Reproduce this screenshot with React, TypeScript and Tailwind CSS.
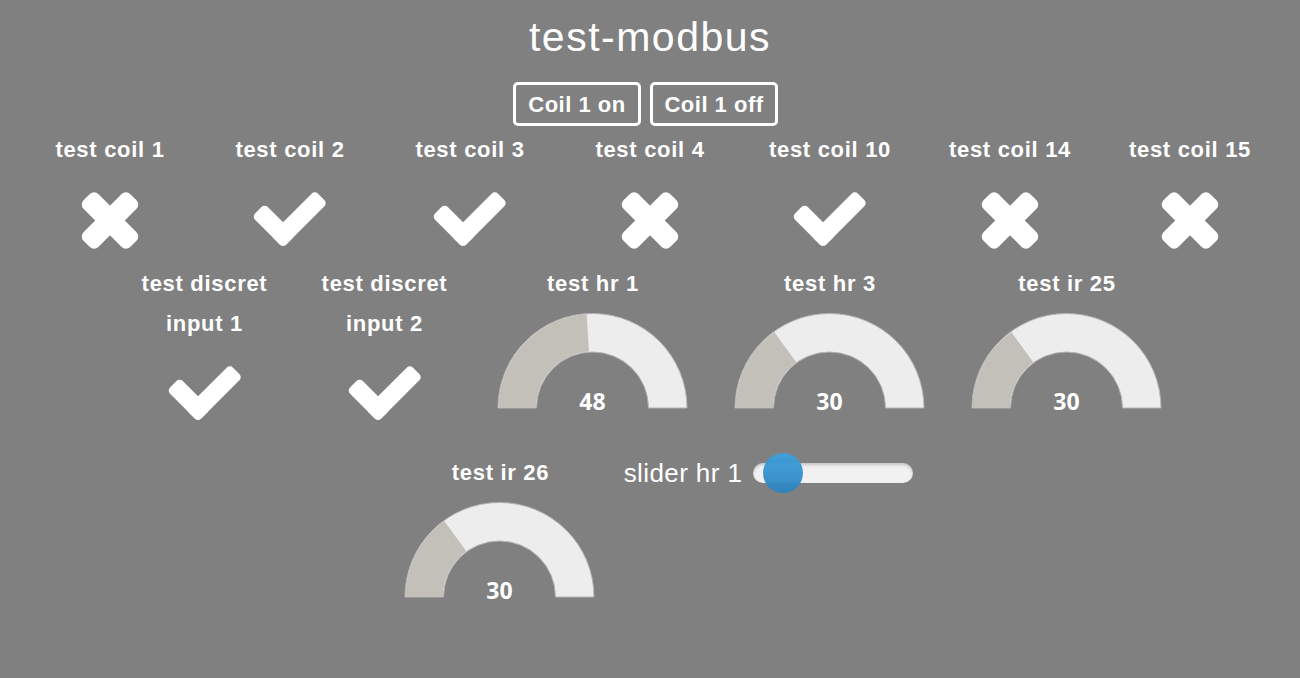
// Tableau de bord modbus: bobines, entrées discrètes, jauges et un curseur

const coils = [
  { name: 'test coil 1', on: false },
  { name: 'test coil 2', on: true },
  { name: 'test coil 3', on: true },
  { name: 'test coil 4', on: false },
  { name: 'test coil 10', on: true },
  { name: 'test coil 14', on: false },
  { name: 'test coil 15', on: false },
]

const discrets = [
  { name: 'test discret input 1', on: true },
  { name: 'test discret input 2', on: true },
]

const gauges = [
  { name: 'test hr 1', value: 48 },
  { name: 'test hr 3', value: 30 },
  { name: 'test ir 25', value: 30 },
]

// coche épaisse: deux barres arrondies qui se rejoignent en bas
function CheckIcon() {
  const t = 18
  return (
    <svg width="74" height="56" viewBox="0 0 74 56" fill="white" overflow="visible">
      <g transform="translate(30 43)">
        <rect x={-t / 2} y={-t / 2} width={54 + t / 2} height={t} rx="4.5" transform="rotate(-45)" />
        <rect x={-t / 2} y={-t / 2} width={35 + t / 2} height={t} rx="4.5" transform="rotate(225)" />
      </g>
    </svg>
  )
}

function CrossIcon() {
  return (
    <svg width="58" height="57" viewBox="0 0 58 57" fill="white" overflow="visible">
      <g transform="translate(29 28.5)">
        <rect x="-33" y="-10.5" width="66" height="21" rx="6" transform="rotate(45)" />
        <rect x="-33" y="-10.5" width="66" height="21" rx="6" transform="rotate(-45)" />
      </g>
    </svg>
  )
}

function Label({ children }: { children: React.ReactNode }) {
  return (
    <div className="px-5 text-center text-[22px] leading-[40px] font-bold tracking-[0.7px] text-white">
      {children}
    </div>
  )
}

function BoolTile({ name, on }: { name: string; on: boolean }) {
  return (
    <div className="w-[180px]">
      <Label>{name}</Label>
      <div className="flex h-[94px] justify-center pt-[22px]">
        {on ? <CheckIcon /> : <CrossIcon />}
      </div>
    </div>
  )
}

function arcPath(cx: number, cy: number, R: number, r: number, from: number, to: number) {
  // angles en degrés, 0 = gauche, 180 = droite
  const p = (rad: number, a: number) => {
    const t = (a * Math.PI) / 180
    return [cx - rad * Math.cos(t), cy - rad * Math.sin(t)]
  }
  const [x1, y1] = p(R, from)
  const [x2, y2] = p(R, to)
  const [x3, y3] = p(r, to)
  const [x4, y4] = p(r, from)
  return `M${x1} ${y1} A${R} ${R} 0 0 1 ${x2} ${y2} L${x3} ${y3} A${r} ${r} 0 0 0 ${x4} ${y4} Z`
}

function Gauge({ name, value }: { name: string; value: number }) {
  const cx = 117.5
  const cy = 104
  const angle = (value / 100) * 180
  return (
    <div className="w-[237px]">
      <Label>{name}</Label>
      <svg width="237" height="149">
        <path d={arcPath(cx, cy, 94.5, 56, 0, 180)} fill="#ededed" stroke="#b4b4b4" strokeWidth="1" />
        <path d={arcPath(cx, cy, 94, 56.5, 0, angle)} fill="#c3c0ba" />
        <text
          x={cx}
          y={cy + 2}
          textAnchor="middle"
          fill="#ffffff"
          fontSize="23"
          fontWeight="700"
          fontFamily="'Open Sans', sans-serif"
        >
          {value}
        </text>
      </svg>
    </div>
  )
}

function SliderTile() {
  return (
    <div className="w-[299px]">
      <div className="flex h-[40px] items-center justify-center gap-[11px]">
        <span className="text-[26px] tracking-[0.4px] text-white">slider hr 1</span>
        <div className="relative h-[20px] w-[160px] rounded-full bg-[#f1f1f1] shadow-[inset_0_2px_3px_rgba(0,0,0,0.18)]">
          <div className="absolute top-[-10px] left-[10px] h-[40px] w-[40px] rounded-full bg-gradient-to-b from-[#3ea0dc] to-[#2c82be] opacity-95" />
        </div>
      </div>
    </div>
  )
}

export default function App() {
  return (
    <div className="min-h-[678px] bg-[#808080] font-['Liberation_Sans',Arial,sans-serif] text-white">
      <div className="flex h-[76px] items-center justify-center text-[41px] tracking-[1.5px]">
        test-modbus
      </div>

      <div className="mt-[6px] flex justify-center gap-[9px] pr-[9px]">
        <button className="h-[44px] w-[128px] rounded-[5px] border-[3px] border-white text-[22px] font-bold tracking-[0.5px]">
          Coil 1 on
        </button>
        <button className="h-[44px] w-[128px] rounded-[5px] border-[3px] border-white text-[22px] font-bold tracking-[0.5px]">
          Coil 1 off
        </button>
      </div>

      <div className="mt-[4px] flex flex-wrap items-start justify-center">
        {coils.map((c) => (
          <BoolTile key={c.name} name={c.name} on={c.on} />
        ))}
        {discrets.map((d) => (
          <BoolTile key={d.name} name={d.name} on={d.on} />
        ))}
        {gauges.map((g) => (
          <Gauge key={g.name} name={g.name} value={g.value} />
        ))}
        <Gauge name="test ir 26" value={30} />
        <SliderTile />
      </div>
    </div>
  )
}
